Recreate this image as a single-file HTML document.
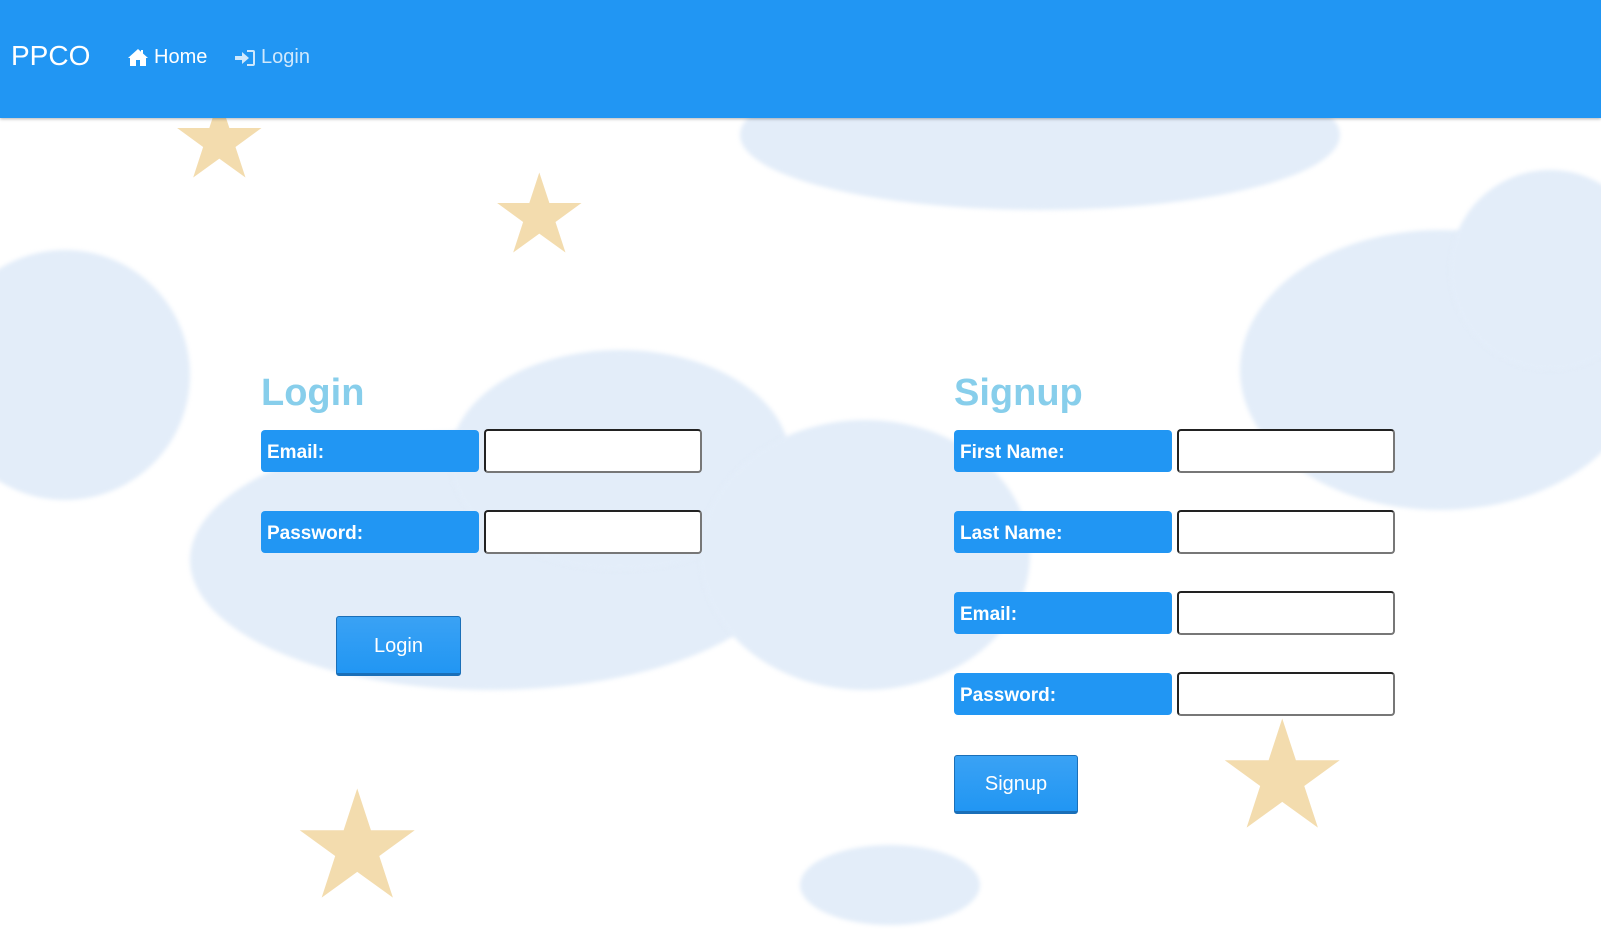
<!DOCTYPE html>
<html><head><meta charset="utf-8"><style>
*{box-sizing:border-box;margin:0;padding:0}
body{width:1601px;height:887px;overflow:hidden;background:#fff;font-family:"Liberation Sans",sans-serif;position:relative}
.cloud{position:absolute;background:#e3edf9;border-radius:50%;filter:blur(2px)}
.star{position:absolute;color:#f3dcae;line-height:1}
nav{position:absolute;left:0;top:0;width:1601px;height:118px;background:#2196f3;box-shadow:0 1px 3px rgba(0,0,0,.3);color:#fff}
.brand{position:absolute;left:11px;top:40px;font-size:28px}
.nl{position:absolute;top:46px;font-size:20px;display:flex;align-items:center;gap:5px}
h2{position:absolute;font-size:38px;color:#87ceeb;font-weight:bold;top:372px}
.lab{position:absolute;width:218px;height:42px;background:#2196f3;border-radius:4px;color:#fff;font-weight:bold;font-size:19px;padding-left:6px;line-height:46px}
.inp{position:absolute;width:218px;height:44px;background:#fff;border:2px solid #222;border-bottom-color:#777;border-right-color:#777;border-radius:4px}
.btn{position:absolute;background:linear-gradient(#3aa2f4,#2196f3);border:1px solid #1a6fb8;border-bottom:3px solid #1a6fb8;border-radius:3px;color:#fff;font-size:20px;text-align:center}
</style></head><body>
<div class="cloud" style="left:740px;top:60px;width:600px;height:150px"></div>
<div class="cloud" style="left:-60px;top:250px;width:250px;height:250px"></div>
<div class="cloud" style="left:190px;top:430px;width:600px;height:260px"></div>
<div class="cloud" style="left:450px;top:350px;width:340px;height:220px"></div>
<div class="cloud" style="left:700px;top:420px;width:330px;height:270px"></div>
<div class="cloud" style="left:1240px;top:230px;width:400px;height:280px"></div>
<div class="cloud" style="left:1450px;top:170px;width:200px;height:200px"></div>
<div class="cloud" style="left:800px;top:845px;width:180px;height:80px"></div>
<div class="star" style="left:170px;top:85px;font-size:110px">★</div>
<div class="star" style="left:490px;top:160px;font-size:110px">★</div>
<div class="star" style="left:290px;top:770px;font-size:150px">★</div>
<div class="star" style="left:1215px;top:700px;font-size:150px">★</div>
<nav>
<div class="brand">PPCO</div>
<div class="nl" style="left:127px"><svg width="22" height="19" viewBox="0 0 22 19"><path d="M11 1 L1 10 L3 10 L3 18 L9 18 L9 12 L13 12 L13 18 L19 18 L19 10 L21 10 L16 5.5 L16 2 L14 2 L14 3.8Z" fill="#fff"/></svg><span>Home</span></div>
<div class="nl" style="left:235px;color:#cfe8fc"><svg width="21" height="18" viewBox="0 0 21 18"><path d="M0 7h7V3l7 6-7 6v-4H0z M12 1h6q2 0 2 2v12q0 2-2 2h-6v-2h6V3h-6z" fill="#cfe8fc"/></svg><span>Login</span></div>
</nav>
<h2 style="left:261px">Login</h2>
<div class="lab" style="left:261px;top:430px">Email:</div>
<div class="inp" style="left:484px;top:429px"></div>
<div class="lab" style="left:261px;top:511px">Password:</div>
<div class="inp" style="left:484px;top:510px"></div>
<div class="btn" style="left:336px;top:616px;width:125px;height:60px;line-height:58px">Login</div>
<h2 style="left:954px">Signup</h2>
<div class="lab" style="left:954px;top:430px">First Name:</div>
<div class="inp" style="left:1177px;top:429px"></div>
<div class="lab" style="left:954px;top:511px">Last Name:</div>
<div class="inp" style="left:1177px;top:510px"></div>
<div class="lab" style="left:954px;top:592px">Email:</div>
<div class="inp" style="left:1177px;top:591px"></div>
<div class="lab" style="left:954px;top:673px">Password:</div>
<div class="inp" style="left:1177px;top:672px"></div>
<div class="btn" style="left:954px;top:755px;width:124px;height:59px;line-height:57px">Signup</div>
</body></html>
